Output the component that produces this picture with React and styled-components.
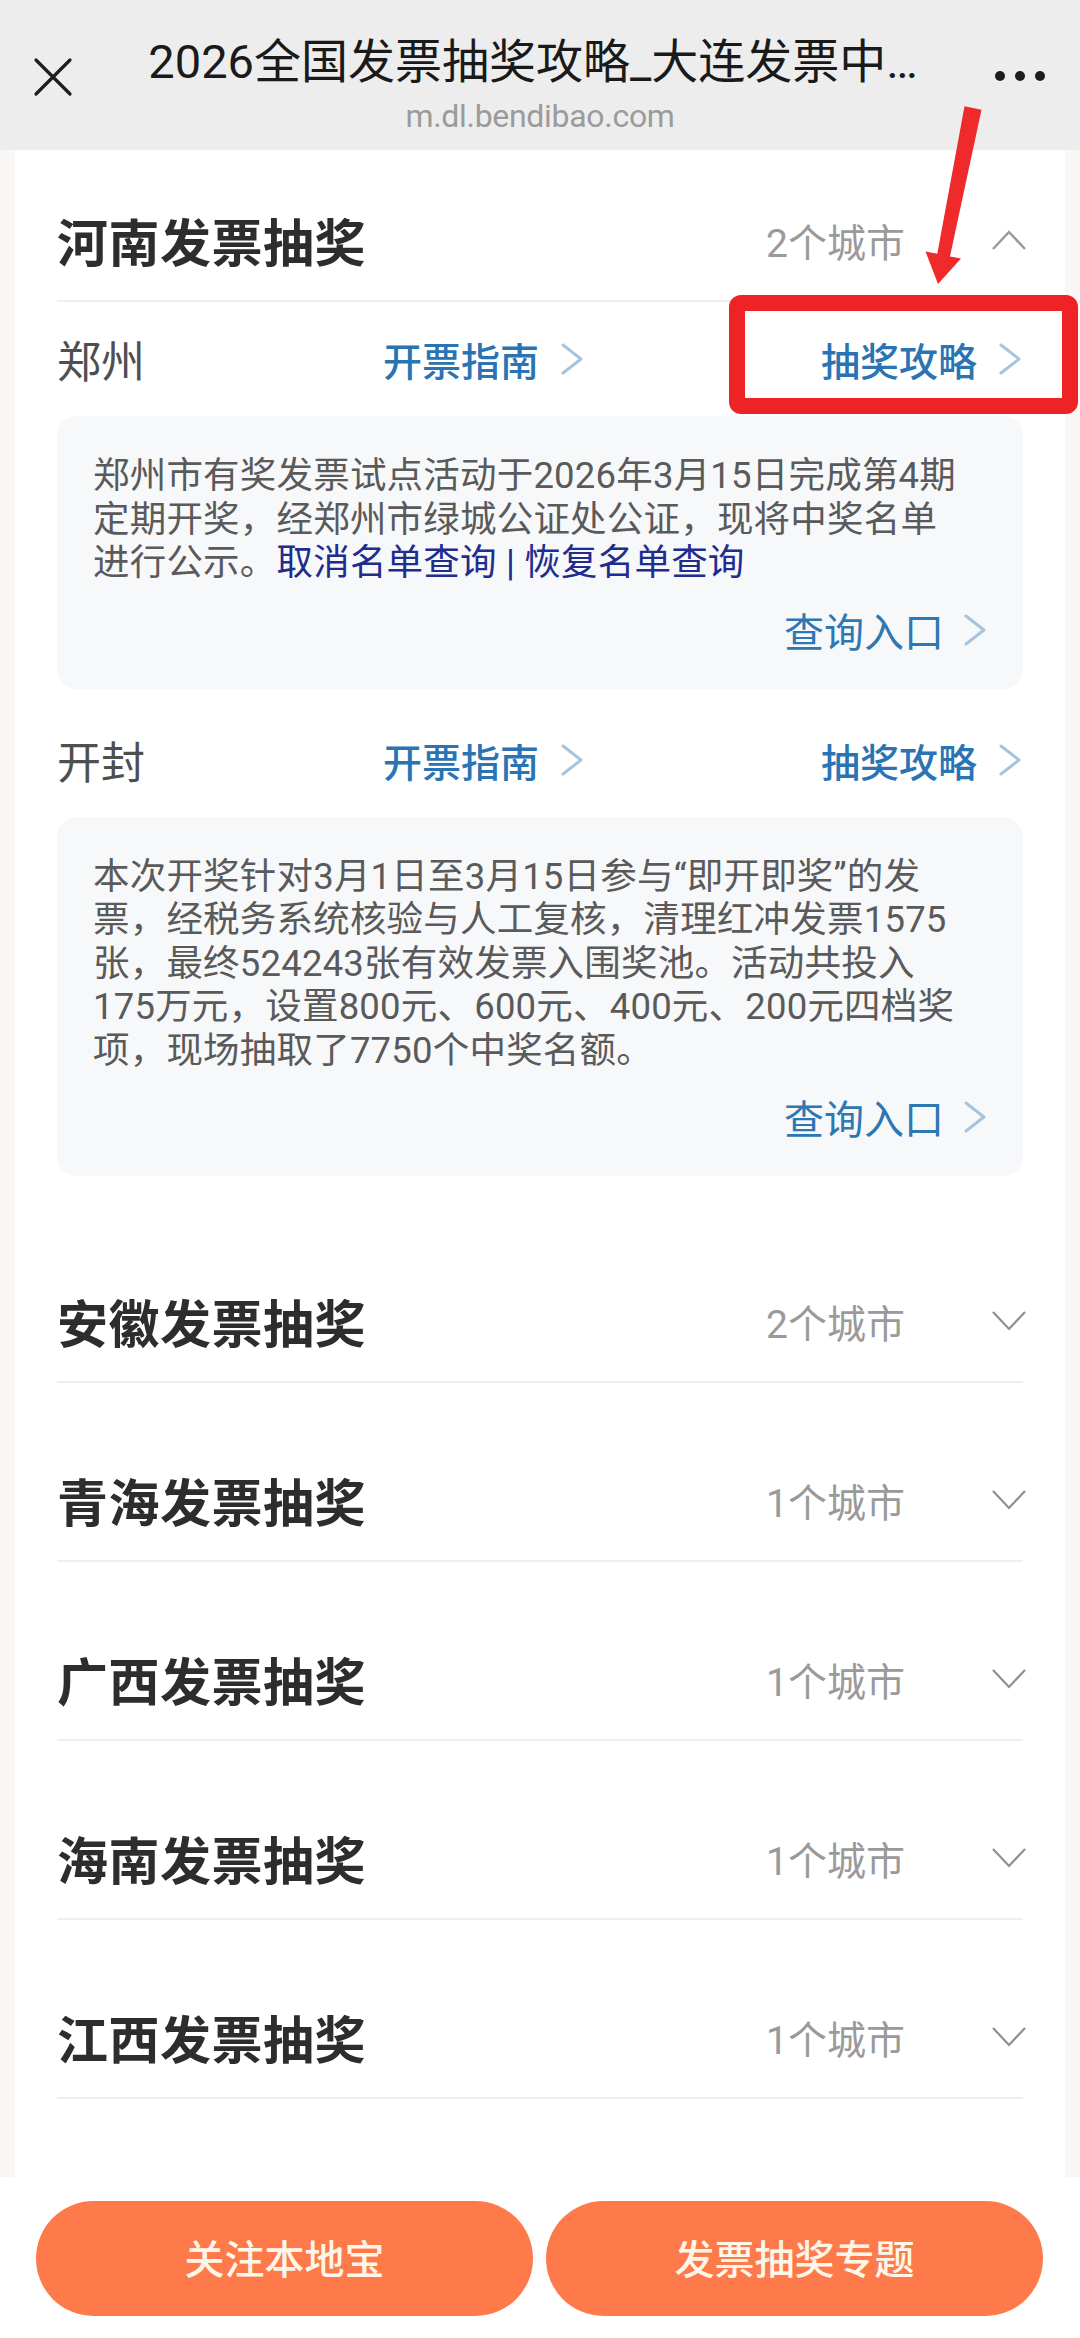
import React from "react";
import styled, { createGlobalStyle } from "styled-components";

const GlobalStyle = createGlobalStyle`
  html, body { margin: 0; padding: 0; }
  body {
    background: #f9f6f6;
    font-family: Roboto, "Noto Sans CJK SC", "Noto Sans", sans-serif;
    -webkit-font-smoothing: antialiased;
  }
  * { box-sizing: border-box; }
`;

const Page = styled.div`
  position: relative;
  height: 100vh;
  display: flex;
  flex-direction: column;
  overflow: hidden;
`;

const TopBar = styled.header`
  flex: 0 0 150px;
  background: #ededed;
  display: grid;
  grid-template-columns: 106px 1fr 106px;
`;

const CloseBtn = styled.div`
  display: flex;
  align-items: center;
  justify-content: center;
  padding-top: 4px;
`;

const TitleBlock = styled.div`
  display: flex;
  flex-direction: column;
  align-items: center;
  padding-top: 34px;
  min-width: 0;
`;

const Title = styled.div`
  font-size: 47px;
  line-height: 56px;
  color: #1a1a1a;
  white-space: nowrap;
  margin-right: 14px;
`;

const Url = styled.div`
  font-family: Roboto, sans-serif;
  font-size: 32px;
  line-height: 36px;
  margin-top: 8px;
  color: #9b9b9b;
  letter-spacing: -0.3px;
`;

const Dots = styled.div`
  display: flex;
  align-items: center;
  gap: 10px;
  padding-left: 21px;
  padding-top: 2px;
`;

const Dot = styled.span`
  width: 10px;
  height: 10px;
  border-radius: 50%;
  background: #1c1c1c;
`;

const Main = styled.main`
  flex: 1 1 auto;
  padding: 0 15px;
  overflow: hidden;
  min-height: 0;
`;

const Panel = styled.div`
  background: #fff;
  height: 100%;
  padding: 30px 42px 0;
`;

const Section = styled.section`
  & + & { margin-top: 57px; }
`;

const Header = styled.div`
  height: 122px;
  display: flex;
  align-items: center;
  border-bottom: 2px solid #efefef;
`;

const Province = styled.h2`
  margin: 0;
  font-family: "Noto Sans CJK SC", sans-serif;
  font-size: 51px;
  font-weight: 700;
  color: #2d2d2d;
  letter-spacing: 0.5px;
`;

const Count = styled.span`
  margin-left: auto;
  margin-right: 86px;
  font-size: 39px;
  color: #9a9a9a;
`;

const Caret = styled.svg`
  width: 36px;
  height: 22px;
  margin-right: -4px;
  flex: none;
`;

const Body = styled.div`
  padding-bottom: 14px;
`;

const CityRow = styled.div`
  position: relative;
  height: 114px;
  display: grid;
  grid-template-columns: 326px auto 1fr auto;
  align-items: center;
`;

const CityName = styled.span`
  font-size: 44px;
  color: #4f4f4f;
`;

const LinkBtn = styled.a`
  display: inline-flex;
  align-items: center;
  gap: 20px;
  font-size: 39px;
  font-weight: 500;
  color: #2a74b3;
  text-decoration: none;
  grid-column: ${(p) => p.$col};
`;

const Chev = styled.svg`
  width: 26px;
  height: 32px;
  flex: none;
`;

const Highlight = styled.div`
  position: absolute;
  left: 672px;
  right: -55px;
  top: -7px;
  bottom: 2px;
  border: 16px solid #ee2326;
  border-radius: 12px;
  pointer-events: none;
`;

const Card = styled.div`
  background: #f7f8fa;
  border-radius: 20px;
  padding: 38px 30px 34px 36px;
  margin-bottom: 14px;
`;

const CardText = styled.p`
  margin: 0;
  font-size: 36.5px;
  line-height: 43.5px;
  color: #5a5a5a;
  white-space: nowrap;
  letter-spacing: 0.2px;
`;

const InlineLink = styled.a`
  color: #202c8e;
  text-decoration: none;
`;

const QueryRow = styled.div`
  margin-top: 20px;
  height: 50px;
  display: flex;
  justify-content: flex-end;
  align-items: center;
  padding-right: 5px;
`;

const QueryLink = styled.a`
  display: inline-flex;
  align-items: center;
  gap: 18px;
  font-size: 40px;
  color: #2d77b3;
  text-decoration: none;
`;

const BottomBar = styled.footer`
  flex: 0 0 161px;
  background: #fff;
  padding: 24px 37px 22px 36px;
  display: grid;
  grid-template-columns: 1fr 1fr;
  gap: 13px;
`;

const ActionBtn = styled.button`
  border: none;
  border-radius: 58px;
  background: #ff7a4b;
  color: #fff6ea;
  font-family: "Noto Sans CJK SC", sans-serif;
  font-size: 40px;
  font-weight: 500;
  display: flex;
  align-items: center;
  justify-content: center;
  padding-bottom: 4px;
`;

const Arrow = styled.svg`
  position: absolute;
  left: 920px;
  top: 100px;
  width: 70px;
  height: 190px;
  pointer-events: none;
`;

const ChevRight = () => (
  <Chev viewBox="0 0 26 32">
    <polyline points="4,2 22,16 4,30" fill="none" stroke="#a7c4dd" strokeWidth="3" strokeLinecap="round" strokeLinejoin="round" />
  </Chev>
);

const CaretIcon = ({ up }) => (
  <Caret viewBox="0 0 36 22">
    {up ? (
      <polyline points="2,20 18,3 34,20" fill="none" stroke="#9a9a9a" strokeWidth="2.5" />
    ) : (
      <polyline points="2,2 18,19 34,2" fill="none" stroke="#8f8f8f" strokeWidth="2.2" />
    )}
  </Caret>
);

const zhengzhou = [
  "郑州市有奖发票试点活动于2026年3月15日完成第4期",
  "定期开奖，经郑州市绿城公证处公证，现将中奖名单",
];

const kaifeng = [
  "本次开奖针对3月1日至3月15日参与“即开即奖”的发",
  "票，经税务系统核验与人工复核，清理红冲发票1575",
  "张，最终524243张有效发票入围奖池。活动共投入",
  "175万元，设置800元、600元、400元、200元四档奖",
  "项，现场抽取了7750个中奖名额。",
];

const collapsed = [
  { name: "安徽发票抽奖", count: "2个城市" },
  { name: "青海发票抽奖", count: "1个城市" },
  { name: "广西发票抽奖", count: "1个城市" },
  { name: "海南发票抽奖", count: "1个城市" },
  { name: "江西发票抽奖", count: "1个城市" },
];

const Lines = ({ lines, trailingBreak }) =>
  lines.map((l, i) => (
    <React.Fragment key={i}>
      {l}
      {(trailingBreak || i < lines.length - 1) && <br />}
    </React.Fragment>
  ));

const City = ({ name, highlight }) => (
  <CityRow>
    <CityName>{name}</CityName>
    <LinkBtn $col={2}>
      开票指南
      <ChevRight />
    </LinkBtn>
    <LinkBtn $col={4}>
      抽奖攻略
      <ChevRight />
    </LinkBtn>
    {highlight && <Highlight />}
  </CityRow>
);

const Query = () => (
  <QueryRow>
    <QueryLink>
      查询入口
      <ChevRight />
    </QueryLink>
  </QueryRow>
);

export default function App() {
  return (
    <>
      <GlobalStyle />
      <Page>
        <TopBar>
          <CloseBtn>
            <svg width="40" height="40" viewBox="0 0 40 40">
              <path d="M3 3 L37 37 M37 3 L3 37" stroke="#1e1e1e" strokeWidth="3.2" strokeLinecap="round" />
            </svg>
          </CloseBtn>
          <TitleBlock>
            <Title>2026全国发票抽奖攻略_大连发票中…</Title>
            <Url>m.dl.bendibao.com</Url>
          </TitleBlock>
          <Dots>
            <Dot />
            <Dot />
            <Dot />
          </Dots>
        </TopBar>
        <Main>
          <Panel>
            <Section>
              <Header>
                <Province>河南发票抽奖</Province>
                <Count>2个城市</Count>
                <CaretIcon up />
              </Header>
              <Body>
                <City name="郑州" highlight />
                <Card>
                  <CardText>
                    <Lines lines={zhengzhou} trailingBreak />
                    进行公示。<InlineLink>取消名单查询</InlineLink>
                    <InlineLink> | </InlineLink>
                    <InlineLink>恢复名单查询</InlineLink>
                  </CardText>
                  <Query />
                </Card>
                <City name="开封" />
                <Card>
                  <CardText>
                    <Lines lines={kaifeng} />
                  </CardText>
                  <Query />
                </Card>
              </Body>
            </Section>
            {collapsed.map((s) => (
              <Section key={s.name}>
                <Header>
                  <Province>{s.name}</Province>
                  <Count>{s.count}</Count>
                  <CaretIcon />
                </Header>
              </Section>
            ))}
          </Panel>
        </Main>
        <BottomBar>
          <ActionBtn>关注本地宝</ActionBtn>
          <ActionBtn>发票抽奖专题</ActionBtn>
        </BottomBar>
        <Arrow viewBox="0 0 70 190">
          <polygon
            points="44.5,6.3 61.5,9.7 30,156.4 41,158.5 18,184 5.5,151.5 17.3,153.8"
            fill="#ee2a2a"
          />
        </Arrow>
      </Page>
    </>
  );
}
